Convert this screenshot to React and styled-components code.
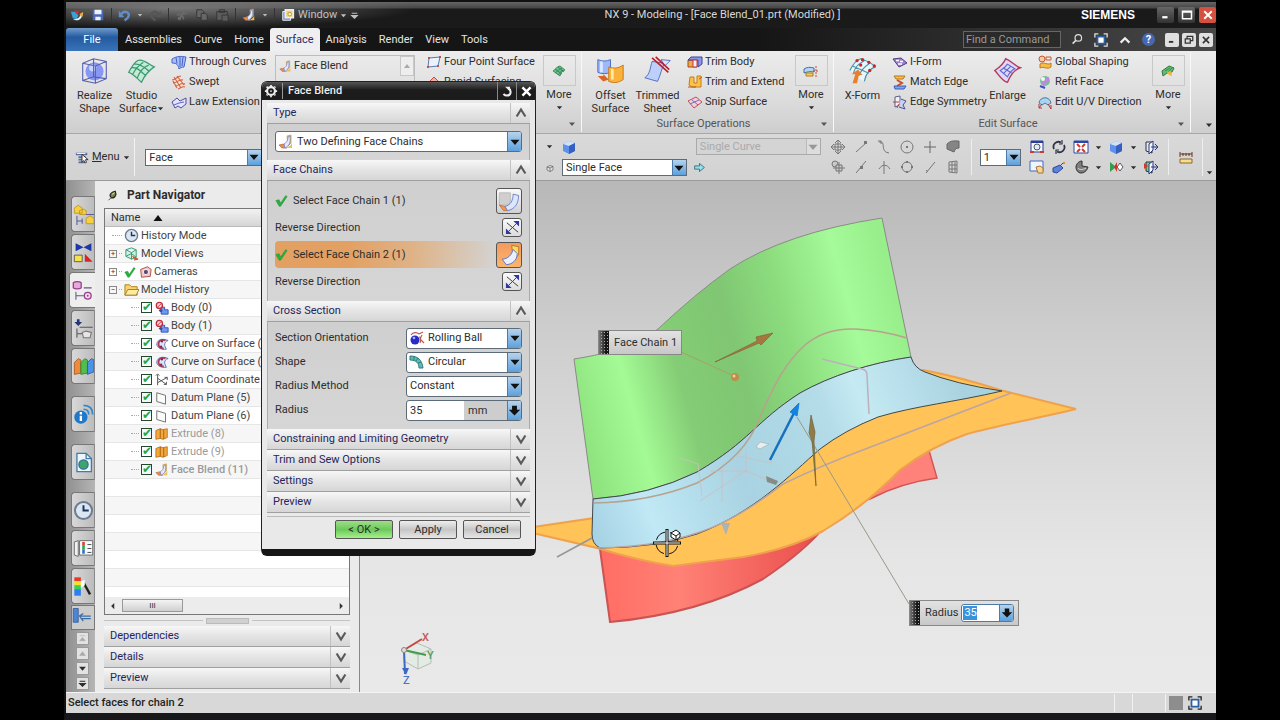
import { useState } from "react";
import styled, { createGlobalStyle } from "styled-components";

const icons = {
  logo: (
    <>
      <path d="M1 4h5l3 4-2 4-4-1z" fill="#3aa0d8" />
      <path d="M4 3h6l-2 4z" fill="#e0242c" />
      <path d="M3 12c5 3 10 0 11-7l-3 1c0 4-3 6-8 6z" fill="#e8f4fa" />
      <path d="M10 7l4-3-1 6z" fill="#f2a128" />
    </>
  ),
  save: (
    <>
      <path d="M2 2h12v12H2z" fill="#4a68b8" />
      <path d="M4 2h8v5H4zM5 10h6v4H5z" fill="#eef2fc" />
    </>
  ),
  undo: (
    <>
      <path d="M1 2v8h7z" fill="#5f8ecb" />
      <path d="M4 6c4-5 11-2 9 3-1 3-3 4-5 5" fill="none" stroke="#5f8ecb" strokeWidth="3" />
    </>
  ),
  redo: (
    <>
      <path d="M15 2v8H8z" fill="#565656" />
      <path d="M12 6C8 1 1 4 3 9c1 3 3 4 5 5" fill="none" stroke="#565656" strokeWidth="3" />
    </>
  ),
  cut: (
    <g fill="none" stroke="#6a6a6a" strokeWidth="2">
      <path d="M11 2L6 11M2 8l12-2M8 8l2 5" />
      <circle cx="5" cy="12" r="1" />
    </g>
  ),
  copy: (
    <g fill="#666" stroke="#333">
      <path d="M2 2h6l2 2v7H2z" />
      <path d="M7 6h5l2 2v6H7z" />
    </g>
  ),
  paste: (
    <g fill="#5c5c5c" stroke="#333">
      <path d="M2 4h12v10H2zM5 2h6v3H5z" />
      <path d="M8 8h7v7H8z" />
    </g>
  ),
  blend: (
    <>
      <path d="M9 2l4-1v8l-3 3z" fill="#f7d65c" stroke="#b98a3a" strokeWidth=".7" />
      <path d="M1 11l5-1 3 4H4z" fill="#e98d4e" stroke="#b8643a" strokeWidth=".7" />
      <path d="M6 10c2-1 4-3 4-7l2-1c1 7-1 10-5 12z" fill="#e3eafd" stroke="#6f80c8" strokeWidth=".8" />
      <path d="M7 14c4-1 7-3 7-6v6z" fill="#f0bf4a" />
    </>
  ),
  window: (
    <>
      <path d="M2 4h9v10H2z" fill="#6c8ee0" stroke="#fff" />
      <path d="M5 2h9v9H5z" fill="#f2d25a" stroke="#e8eefc" strokeWidth="2" />
      <circle cx="10" cy="7" r="2" fill="#fffbe0" stroke="#b89020" />
    </>
  ),
  realize: (
    <>
      <circle cx="8" cy="8.500" r="5" fill="#8797f2" />
      <circle cx="7" cy="6.500" r="2" fill="#cdd6ff" />
      <path
        d="M1.500 4l6-2.500 7 1.500v9.500l-6 2.500-7-1.500zM1.500 4l7 1.500 6-2.500M8.500 5.500V15M1.500 13.500l6-2 7 1M7.500 1.500v10"
        fill="none"
        stroke="#5660b0"
        strokeWidth=".6"
      />
    </>
  ),
  studio: (
    <>
      <path d="M1 9C3 5 5 3 6 2.500 9 1 12 5 15 6c-3 2-5 4-7 8.500C6 13 4 10 1 9z" fill="#c2ecd6" />
      <path
        d="M1 9C3 5 5 3 6 2.500 9 1 12 5 15 6c-3 2-5 4-7 8.500C6 13 4 10 1 9zM3 10.500C5 6 7 5 9 3.500M5.500 12.500C7 8 9 6 12 5M2.500 6.500C6 6 8 9 10.500 11M4 4.500C8 4 10 7 12.500 8.500"
        fill="none"
        stroke="#3f9a74"
        strokeWidth=".7"
      />
    </>
  ),
  through: (
    <>
      <path d="M1 5c5-3 9-3 14-2l-2 10c-2 0-4 1-5 2-1-4-2-6-7-6z" fill="#a8bcf8" />
      <path
        d="M1 5c5-3 9-3 14-2l-2 10c-2 0-4 1-5 2-1-4-2-6-7-6zM5 3.500l1 6M9 3v10M12 3l-1 9"
        fill="none"
        stroke="#4563c8"
      />
    </>
  ),
  swept: (
    <>
      <path d="M2 5l7-3 5 7-6 5z" fill="#f7e2d6" />
      <path
        d="M1 6c4 0 5-4 9-4M2 9c4 0 6-4 10-3M4 12c4 0 6-4 10-2M7 15c3-1 4-3 7-2M3 3l7 11M6 2l7 9M2 7l4 7"
        fill="none"
        stroke="#d4603e"
        strokeWidth="1.100"
      />
    </>
  ),
  law: (
    <>
      <path d="M1 8l5-4 3 3 6-3v6l-5 4-3-2-3 2z" fill="#dfe4ff" stroke="#50509c" />
      <path d="M3 11l5-2 5-1" stroke="#6c62c0" fill="none" />
    </>
  ),
  fourPoint: (
    <>
      <path d="M3 4l11-1-2 9-10 1z" fill="#eaf2fb" stroke="#5b78b0" />
      <path d="M2 3h2v2H2zM13 2h2v2h-2zM11 11h2v2h-2zM1 12h2v2H1z" fill="#c2543f" />
    </>
  ),
  rapid: <path d="M2 9l6-6 6 6-6 5z" fill="#f3b0a4" stroke="#d2482e" />,
  more: (
    <>
      <path d="M2 8c2-1 4-5 7-5l5 4c-3 1-4 3-5 6z" fill="#6bc08a" />
      <path
        d="M2 8c2-1 4-5 7-5l5 4c-3 1-4 3-5 6zM4 10c3-2 4-4 7-5M7 12c2-3 3-4 5-5M4 6l7 5M7 4l6 5"
        stroke="#2b7d4e"
        fill="none"
        strokeWidth=".8"
      />
    </>
  ),
  offset: (
    <>
      <path d="M1 2c2 1 5 1 7 0v7c-2 1-5 1-7 0z" fill="#9bbaf8" stroke="#4264c8" strokeWidth=".5" />
      <path d="M3 3v6" stroke="#dfe9ff" strokeWidth="1.500" />
      <path d="M7 6c3 1 5 1 8-1v8c-3 2-5 2-8 1z" fill="#fbb23a" stroke="#c87414" strokeWidth=".5" />
      <path d="M9 7v6" stroke="#ffe9a8" strokeWidth="1.500" />
      <path d="M1 11l3 0v-1l3 3-3 1z" fill="#d8652a" />
    </>
  ),
  trimmed: (
    <>
      <path d="M5 3l7 1c-2 3-2 6-4 10L1 12c3-2 3-6 4-9z" fill="#bcd0fb" stroke="#4c68bd" strokeWidth=".5" />
      <path d="M10 2l5 .500-3 3z" fill="#dce6fd" stroke="#4c68bd" strokeWidth=".5" />
      <path d="M5 1l9 8M7 .500l7.500 7" stroke="#b8202c" strokeWidth=".9" />
    </>
  ),
  trimBody: (
    <>
      <path d="M1 6h9v7H1z" fill="#f2a83c" stroke="#a04a24" />
      <path d="M1 6l3-3h11v7l-4 3V6z" fill="#8a9ae4" stroke="#3c3f98" />
      <path d="M6 6h4v7H6z" fill="#f6f0fa" stroke="#c63a3a" />
    </>
  ),
  trimExtend: (
    <>
      <path d="M3 3h4v6h3V2h4v11H5l-3-2z" fill="#fbc244" stroke="#c87a18" />
      <path d="M1 13h8M12 5l3-2" stroke="#b05a28" />
    </>
  ),
  snip: (
    <>
      <path d="M1 7l8-4 6 5-8 6z" fill="#f8d0d4" stroke="#c44a5e" />
      <path d="M3 10l9-4M5 6l6 5" stroke="#6a6ec4" />
    </>
  ),
  moreOps: (
    <>
      <path d="M1 6c3-2 6-2 10-1v4c-4-1-7 0-10 1z" fill="#b4d8f4" stroke="#3f6fb6" />
      <path d="M3 10h7v3H3z" fill="#f8cf58" stroke="#b07a1c" />
      <path d="M13 3v11M10 8h6" stroke="#c94a3a" strokeDasharray="2 1" />
    </>
  ),
  xform: (
    <>
      <path d="M1 8C3 4 5 2 7 1.500c3 1 6 2 8 4.500-3 1-5 3-6 8-3-1-5-4-8-6z" fill="#e6f6fb" />
      <path
        d="M1 8C3 4 5 2 7 1.500c3 1 6 2 8 4.500-3 1-5 3-6 8M3 9.500c1-4 3-5 6-7M6 11c1-3 3-5 6-7M2.500 5.500l9 4"
        fill="none"
        stroke="#4f8fa8"
        strokeWidth=".6"
      />
      <g fill="#c62626">
        <circle cx="5" cy="2.500" r=".9" />
        <circle cx="8" cy="2" r=".9" />
        <circle cx="11.500" cy="3.500" r=".9" />
        <circle cx="14.500" cy="5.500" r=".9" />
        <circle cx="7" cy="5" r=".9" />
        <circle cx="12" cy="8" r=".9" />
      </g>
      <path d="M2.500 15l1.500-5H2l3.500-2.500L8 10.500H6L5 15z" fill="#e87f2c" />
    </>
  ),
  iform: (
    <>
      <path d="M1 5l8-1 6 5-8 4z" fill="#9d82cc" stroke="#553a88" />
      <path d="M4 6.500h3M8 7.500h3M6 10h4" stroke="#fff" strokeWidth="1.500" />
    </>
  ),
  match: (
    <>
      <path d="M2 2h11l-2 3H4z" fill="#f6c04a" stroke="#b8761c" />
      <path d="M5 6l5 3-5 3" stroke="#c7502c" fill="none" strokeWidth="2" />
      <path d="M2 12h12l-2 3H3z" fill="#7ba8ec" stroke="#3a5db4" />
    </>
  ),
  symmetry: (
    <>
      <path d="M3 3l5-1v9l-5 2z" fill="#f2f2fa" stroke="#5a5a88" />
      <path d="M9 5l5 2-3 4 2 4-6-2" fill="#c9d2f4" stroke="#4b4f94" />
      <path d="M1 8h6M5 14l2-4" stroke="#ba3c3c" />
    </>
  ),
  enlarge: (
    <>
      <path d="M1 8C4 6 6 4 7 1.500c3 1 5 4 8 5-3 1-5 3-7 8C5 14 3 10 1 8z" fill="#dcd8fa" stroke="#b83a5c" strokeWidth=".8" />
      <path
        d="M4 8c2-1 3-2 4-3.500l4 2.500c-2 1-3 2-4 4.500zM6 9.500l4-4M5.500 6.500l5 3"
        fill="none"
        stroke="#6468c8"
        strokeWidth=".6"
      />
    </>
  ),
  global: (
    <>
      <path d="M3 10c4-3 8 2 11-1v4c-4 3-7-1-11 1z" fill="#f6bd45" stroke="#c07a1a" />
      <circle cx="5" cy="5" r="3" fill="#f7c9a4" stroke="#c8562c" />
      <path d="M9 3h5v3H9z" fill="none" stroke="#c8562c" />
    </>
  ),
  refit: (
    <>
      <circle cx="8" cy="7" r="5" fill="#6fc58e" />
      <path d="M4 9c2-5 5-6 8-6v5c-3 0-4 2-5 5z" fill="#ba8cdb" />
      <circle cx="6" cy="5" r="2" fill="#eafaf0" />
      <path d="M3 12l5 2" stroke="#3f52c2" strokeWidth="2" />
    </>
  ),
  uv: (
    <>
      <path d="M2 9c1-7 11-7 12 0l-3 2-3-2-3 2z" fill="#a8d4ec" stroke="#4b7cac" />
      <path d="M2 14l3-4M14 15l-3-5M2 10v4h3M14 11v4" stroke="#b8343c" fill="none" />
    </>
  ),
  moreEdit: (
    <>
      <path d="M2 8l7-5 5 2-2 4-5 1-4 3z" fill="#63bd6a" stroke="#2d7842" />
      <path d="M5 8l5-3M8 9l4-4" stroke="#2d7842" strokeWidth=".7" />
      <path d="M7 9l4-1 1 5-3-1z" fill="#f2b33e" />
    </>
  ),
  menu: (
    <>
      <path d="M1 3h13v3H1zM4 7h8v2H4zM4 10h8v2H4zM4 13h8v2H4z" fill="#5b6f9c" />
      <path d="M2 4h10" stroke="#fff" />
      <path d="M8 5v9l2-2 2 3 1-1-1-3h3z" fill="#fff" stroke="#222" />
    </>
  ),
  cube: (
    <>
      <path d="M2 5l6-3 6 2v8l-6 3-6-3z" fill="#5f90ea" />
      <path d="M2 5l6-3 6 2-6 3z" fill="#cfe2fb" />
      <path d="M8 7v8l6-3V4z" fill="#3660c0" />
    </>
  ),
  cubeLine: (
    <path d="M2 6l6-3 6 2v7l-6 3-6-3zM2 6l6 2 6-3M8 8v7" fill="#dfe3e8" stroke="#333" />
  ),
  go: <path d="M2 6h6V3l6 5-6 5v-3H2z" fill="#8fe0ea" stroke="#34606e" />,
  moveAll: (
    <path
      d="M8 1v14M1 8h14M5 4l3-3 3 3M5 12l3 3 3-3M4 5L1 8l3 3M12 5l3 3-3 3M5 5h6v6H5z"
      fill="none"
      stroke="#777"
    />
  ),
  cluster: (
    <g fill="#c9c9c9" stroke="#777">
      <circle cx="5" cy="5" r="3" />
      <path d="M6 6h6v6H6zM9 3v12M3 9h12" />
    </g>
  ),
  lineEnd: (
    <>
      <path d="M3 13L13 4" stroke="#777" />
      <path d="M11 2h3v3h-3z" fill="#777" />
    </>
  ),
  lineMid: (
    <>
      <path d="M3 14L13 2" stroke="#777" />
      <path d="M7 7h3v3H7z" fill="#777" />
    </>
  ),
  spline: <path d="M3 3c8-2 0 10 10 11M2 2h3v3" fill="none" stroke="#777" />,
  cross: <path d="M3 10c3-5 8-5 11 0M8 2v13" fill="none" stroke="#777" />,
  target: (
    <>
      <circle cx="8" cy="8" r="6" fill="none" stroke="#777" />
      <circle cx="8" cy="8" r="1" fill="#555" />
    </>
  ),
  quad: (
    <>
      <circle cx="8" cy="8" r="5" fill="none" stroke="#777" />
      <path d="M7 2h2v2H7zM7 12h2v2H7zM2 7h2v2H2zM12 7h2v2h-2z" fill="#777" />
    </>
  ),
  plus: <path d="M8 2v12M2 8h12" stroke="#666" />,
  slash: <path d="M4 14l9-11M4 11l2 2" stroke="#777" />,
  face: <path d="M2 5c4-4 8-3 12-3v7c-3 0-4 1-5 4L2 10z" fill="#858585" stroke="#666" />,
  gridFace: <path d="M4 3l8-1v12l-8-1zM4 6h8M4 10h8M7 3v10M10 3v10" fill="none" stroke="#777" />,
  zoomWin: (
    <>
      <path d="M2 2h12v11H2z" fill="#f5f7ff" stroke="#2a3e9c" />
      <path d="M2 3h12" stroke="#2a3e9c" strokeWidth="2" />
      <circle cx="8" cy="8" r="3" fill="#dcecf8" stroke="#555" />
      <path d="M1 13h4M11 13h4" stroke="#d03a2a" strokeWidth="2" />
    </>
  ),
  rotate: (
    <g fill="none" stroke="#2f3548" strokeWidth="1.800">
      <path d="M3 10a5 5 0 0 1 7-6.500M13 6a5 5 0 0 1-7 6.500" />
      <path d="M11 1v4H8M5 15v-4h3" strokeWidth="1.200" />
    </g>
  ),
  fit: (
    <>
      <path d="M1 2h14v12H1z" fill="#fff" stroke="#2a48a4" />
      <path d="M1 3h14" stroke="#2a48a4" strokeWidth="2" />
      <path d="M4 5l3 3M12 5L9 8M4 13l3-3M12 13L9 10" stroke="#d03a2a" strokeWidth="2" />
    </>
  ),
  orient: (
    <>
      <path d="M3 3h6v11l-6-2z" fill="#e4e8fa" stroke="#333" />
      <path d="M6 5l4-3v9l-4 4z" fill="#f4f6ff" stroke="#26387e" />
      <path d="M8 8h6M12 5l3 3-3 3" fill="none" stroke="#26387e" />
    </>
  ),
  orientAxis: (
    <>
      <path d="M3 3h6v11l-6-2z" fill="#7fc49a" stroke="#333" />
      <path d="M6 5l4-3v9l-4 4z" fill="#f4f6ff" stroke="#26387e" />
      <path d="M8 8h6M12 5l3 3-3 3" fill="none" stroke="#26387e" />
      <path d="M1 4l4 3-4 3z" fill="#d03a2a" />
    </>
  ),
  pan: (
    <>
      <path d="M1 2h13v10H1z" fill="#eef4ff" stroke="#4468b8" />
      <path d="M7 8l4-1 3 2v5H9z" fill="#f6d49a" stroke="#a8762c" />
    </>
  ),
  persp: (
    <>
      <path d="M2 9l7-3 3 3-6 5-4-1z" fill="#5c82dc" stroke="#2b4798" />
      <path d="M9 7l4-4" stroke="#2b4798" />
      <path d="M12 3h2v2h-2z" fill="#e0893a" />
    </>
  ),
  section: (
    <>
      <path d="M3 8c0-3 3-6 6-6v5l6 1c-1 4-4 6-7 6s-5-3-5-6z" fill="#7d7d7d" stroke="#333" />
      <path d="M5 9c1 2 5 2 8 0" stroke="#ddd" fill="none" />
    </>
  ),
  show: (
    <>
      <path d="M2 3l6 5-6 5z" fill="#2fa04c" />
      <path d="M6 8l3-5v10z" fill="#d2322a" />
      <path d="M9 8l3-4 3 4-3 4z" fill="#fff" stroke="#556" />
    </>
  ),
  measure: (
    <>
      <path d="M2 3v5M14 3v5M2 5h12M5 4v3M8 4v3M11 4v3" stroke="#6a3528" />
      <path d="M2 10h12v4H2z" fill="#f6dd92" stroke="#8a6a20" />
    </>
  ),
  clock: (
    <>
      <circle cx="8" cy="8" r="6.500" fill="#dbe6f4" stroke="#6e7c90" strokeWidth="1.500" />
      <path d="M8 4v4h4" fill="none" stroke="#1f3558" strokeWidth="1.500" />
    </>
  ),
  views: (
    <>
      <path d="M2 4l6-2 5 2v8l-5 2-6-3zM2 4l6 3 5-3M8 7v7M2 11l6-3 5 4" fill="#d2f2e4" stroke="#2c9c72" />
      <path d="M9 11l6 3-4 1" fill="#e2603a" stroke="#c94a2c" />
    </>
  ),
  camera: (
    <>
      <path d="M3 5l8-3 4 3-1 8-10 1z" fill="#f0c9c4" stroke="#a84440" />
      <circle cx="9" cy="8" r="3" fill="#62487a" stroke="#fff" />
    </>
  ),
  tick: <path d="M1 8l4-1 2 4 6-9 2 1-8 12H5z" fill="#26b03c" stroke="#1c8a2e" strokeWidth=".5" />,
  folder: (
    <>
      <path d="M1 3h5l2 2h6v9H1z" fill="#f8d36a" stroke="#a8801e" />
      <path d="M4 8h12l-3 6H1z" fill="#fdeaa0" stroke="#a8801e" />
    </>
  ),
  body: (
    <>
      <path d="M7 7h4v3h4v5H7z" fill="#6f9af0" stroke="#2f4faa" />
      <path d="M5 10l3 2" stroke="#2f4faa" strokeWidth="3" />
      <circle cx="5" cy="5" r="3.500" fill="#f8d0d0" stroke="#c02c3c" strokeWidth="1.500" />
      <path d="M3 7l4-4" stroke="#c02c3c" />
    </>
  ),
  curveOn: (
    <>
      <path d="M2 8C3 3 8 1 15 4c-3 1-4 3-4 5 0 1 1 3 2 5C7 15 2 12 2 8z" fill="#d8e4fb" stroke="#5468a8" />
      <path d="M12 4C7 2 4 5 4 8s2 5 6 5" fill="none" stroke="#a83a60" strokeWidth="2" />
      <circle cx="8" cy="5" r="1.300" fill="#8c2038" />
      <circle cx="7" cy="11" r="1.300" fill="#8c2038" />
    </>
  ),
  csys: (
    <path
      d="M3 2v12M3 6l10 7M3 11l11-6M1 3l2-2 2 2M10 13h3v-3M11 5h3v3"
      fill="none"
      stroke="#444"
    />
  ),
  plane: <path d="M2 2l10 3v10L2 12z" fill="#fbfbfb" stroke="#5f675f" />,
  extrude: (
    <>
      <path d="M1 4l5-2 3 1 5-1v10l-5 2-3-1-5 1z" fill="#f5a83a" stroke="#b8701c" />
      <path d="M6 2v11M10 3v11" stroke="#9c5a18" />
    </>
  ),
  pin: (
    <>
      <path d="M5 12L2 15" stroke="#222" />
      <path d="M4 9c0-3 3-5 7-6l1 4c-1 4-4 5-6 5z" fill="#7d8a3c" stroke="#222" strokeWidth="1.500" />
      <path d="M7 7l3-2" stroke="#fff" />
    </>
  ),
  assembly: (
    <>
      <path d="M1 3l3-2 3 2v4H1zM5 5l3-1 2 1v3H5zM10 11l3-2 3 2v4h-6z" fill="#f7cf3f" stroke="#b8901c" strokeWidth=".6" />
      <path d="M10 8h6M3 9v7M3 13h4M7 11v4" stroke="#5b5b9c" fill="none" strokeWidth=".8" />
    </>
  ),
  constraint: (
    <>
      <path d="M2 1l6 3-6 3zM14 1L8 4l6 3z" fill="#1c37a8" />
      <path d="M1 10h6v5H1z" fill="#f8e24a" stroke="#444" strokeWidth=".6" />
      <path d="M9 9l6 6H9z" fill="#d4252a" />
    </>
  ),
  partNav: (
    <>
      <path d="M1 2c1-1 5-1 6 0v4c-1 1-5 1-6 0z" fill="#e9a8dc" stroke="#96408a" />
      <path d="M9 6h6M3 9v6M3 12h6" stroke="#5b5b7c" fill="none" strokeWidth=".8" />
      <circle cx="12" cy="12" r="2.600" fill="#f5d6f0" stroke="#96408a" />
      <circle cx="12" cy="12" r=".7" fill="#96408a" />
    </>
  ),
  reuse: (
    <>
      <path d="M3 1h2v2h2L4 6 1 3h2z" fill="#22367c" />
      <path d="M5 7h10M3 8v7M3 12h4" stroke="#555" fill="none" strokeWidth=".8" />
      <path d="M7 11l3-1 4 1-1 4-5 0z" fill="#e6e6e6" stroke="#777" strokeWidth=".8" />
    </>
  ),
  library: (
    <>
      <path d="M1 5l3-3 2 1v10l-5 1z" fill="#f08a3a" stroke="#9c5420" strokeWidth=".6" />
      <path d="M6 5l3-3 2 1v10l-5 1z" fill="#4fc04e" stroke="#2c7c2c" strokeWidth=".6" />
      <path d="M11 5l3-3 2 1v9l-5 2z" fill="#4c92e8" stroke="#2c549c" strokeWidth=".6" />
    </>
  ),
  info: (
    <>
      <circle cx="6" cy="10" r="5" fill="#1f78c8" />
      <path d="M6 9v4M6 6v2" stroke="#fff" strokeWidth="1.800" />
      <path d="M8 4c3 0 4 2 4 4M8 1c5 0 7 3 7 7" fill="none" stroke="#2f86cc" strokeWidth="1.300" />
    </>
  ),
  web: (
    <>
      <path d="M3 1h7l4 4v10H3z" fill="#eef6fc" stroke="#3f7ca8" />
      <path d="M10 1v4h4" fill="none" stroke="#3f7ca8" />
      <circle cx="8" cy="9.500" r="3.500" fill="#3fa46c" stroke="#2c6c9c" />
    </>
  ),
  roles: (
    <>
      <path d="M1 3l3-1v12l-3-1z" fill="#f2f2f2" stroke="#666" strokeWidth=".7" />
      <path d="M5 2h10v11H5z" fill="#f6fbff" stroke="#666" strokeWidth=".7" />
      <path d="M7 3h2v3H7z" fill="#d8462c" />
      <path d="M7 6h2v3H7z" fill="#38a04e" />
      <path d="M7 9h2v3H7z" fill="#3a72c8" />
      <path d="M11 5h3M11 8h3M11 11h3" stroke="#444" strokeWidth=".7" />
    </>
  ),
  palette: (
    <>
      <path d="M1 1h5v3H1z" fill="#e83a22" />
      <path d="M1 4h5v3H1z" fill="#f6e02c" />
      <path d="M1 7h5v3H1z" fill="#3ccf56" />
      <path d="M1 10h5v5H1z" fill="#2b7ff0" />
      <path d="M8 5l5 9" stroke="#222" strokeWidth="1.800" />
      <path d="M6 4l3-1 0 4-3 2z" fill="#fff" />
    </>
  ),
  wizard: (
    <>
      <path d="M1 2h4v11H1z" fill="#4c86d4" stroke="#2b5490" strokeWidth=".6" />
      <path d="M6 8h9M7 10h8M9 6L6 8l3 4" stroke="#3a6ca8" fill="none" />
    </>
  ),
  selFace: (
    <>
      <path d="M1 2h8v5c0 3-1 4-4 4H1z" fill="#cfcfcf" stroke="#a5a5a5" strokeWidth=".4" />
      <path d="M1 11l4 1 2 3H4z" fill="#f09a4e" stroke="#b8643a" strokeWidth=".5" />
      <path d="M5 12c4-1 6-4 6-9l4 1c0 6-3 10-8 11z" fill="#dce6ff" stroke="#5c74c0" strokeWidth=".6" />
    </>
  ),
  selFaceHot: (
    <>
      <path d="M10 1l5 1v6l-4 3z" fill="#fbdc62" stroke="#a85a1c" strokeWidth=".5" />
      <path d="M3 11c4 0 7-3 8-7l3 3c0 5-4 8-8 8z" fill="#eaf0ff" stroke="#5c74c0" strokeWidth=".7" />
    </>
  ),
  reverse: (
    <>
      <path d="M2 3l12 10" stroke="#333" />
      <path d="M4 12l8-8" stroke="#2c38a4" />
      <path d="M1 9v6h6zM9 1h6v6z" fill="#2c38a4" />
    </>
  ),
  ball: (
    <>
      <circle cx="6" cy="10" r="4.500" fill="#2a2ac8" />
      <circle cx="5" cy="8" r="1.300" fill="#a8b4ff" />
      <path d="M2 5c2-3 6-3 8-1M10 4l4-2M10 7c2 0 2 3 1 6M13 5l-2 4 4 4" fill="none" stroke="#c6564c" strokeWidth="1.200" />
    </>
  ),
  circular: (
    <>
      <path d="M1 2c8 0 12 4 13 12h-4C10 9 7 6 1 6z" fill="#5fbcb4" stroke="#2c7c78" />
      <path d="M5 2v4M9 4L7 7M12 8l-3 1" stroke="#2c7c78" fill="none" />
    </>
  ),
  search: (
    <>
      <circle cx="9" cy="6" r="4" fill="none" stroke="#ddd" strokeWidth="1.500" />
      <path d="M6 9l-4 4" stroke="#ddd" strokeWidth="2" />
    </>
  ),
  full: (
    <>
      <path d="M1 5V1h4M11 1h4v4M15 11v4h-4M5 15H1v-4" fill="none" stroke="currentColor" strokeWidth="1.500" />
      <path d="M4 4h8v8H4z" fill="#fff" stroke="#2d5fa0" strokeWidth="2" />
    </>
  ),
  up: <path d="M3 11l5-5 5 5" fill="none" stroke="#eee" strokeWidth="2.500" />,
  gear: (
    <>
      <circle cx="8" cy="8" r="4.500" fill="none" stroke="#eee" strokeWidth="2.500" />
      <path d="M8 1v2M8 13v2M1 8h2M13 8h2M3 3l1.500 1.500M12 12l1 1M13 3l-1 1M3 13l1-1" stroke="#eee" strokeWidth="2" />
      <circle cx="8" cy="8" r="1" fill="#eee" />
    </>
  ),
  reset: (
    <>
      <path d="M9 4c4 2 4 9-2 9-2 0-3-1-4-2" fill="none" stroke="#eee" strokeWidth="2.500" />
      <path d="M5 2h6v6z" fill="#eee" />
    </>
  ),
  close: <path d="M3 3l10 10M13 3L3 13" stroke="#fff" strokeWidth="3" />,
  chevUp: <path d="M3 12l5-8 5 8" fill="none" stroke="#5a5a5a" strokeWidth="2.500" />,
  chevDown: <path d="M3 4l5 8 5-8" fill="none" stroke="#5a5a5a" strokeWidth="2.500" />,
  caret: <path d="M2 5h12l-6 7z" fill="currentColor" />,
  fat: <path d="M5 2h6v5h4l-7 7-7-7h4z" fill="#111" />,
  toTop: <path d="M3 3h10M3 12l5-6 5 6z" fill="#aaa" stroke="#aaa" />,
  triUp: <path d="M2 12l6-8 6 8z" fill="#aaa" />,
  toEnd: <path d="M3 8l5 5 5-5zM3 4h10" fill="currentColor" stroke="currentColor" strokeWidth="2" />,
  left: <path d="M10 3v10L5 8z" fill="#333" />,
  right: <path d="M6 3v10l5-5z" fill="#333" />,
  min: <path d="M3 11h7" stroke="currentColor" strokeWidth="3" />,
  max: <path d="M2 3h12v10H2zM2 4h12" fill="none" stroke="currentColor" strokeWidth="2" />,
  restore: <path d="M5 6V2h9v7h-3M2 6h8v7H2z" fill="none" stroke="currentColor" strokeWidth="2" />,
  cross2: <path d="M3 3l10 10M13 3L3 13" stroke="currentColor" strokeWidth="2.500" />,
};

const Icon = ({ name, size = 16 }) => (
  <svg width={size} height={size} viewBox="0 0 16 16" aria-hidden="true">
    {icons[name]}
  </svg>
);

const Drop = ({ id, label, value, icon, disabled, small }) => (
  <DropBox $disabled={disabled} $small={small}>
    {icon && <Icon name={icon} />}
    <select id={id} aria-label={label} disabled={disabled} defaultValue={value}>
      <option>{value}</option>
    </select>
    <DropArrow $disabled={disabled}>
      <Icon name="caret" size={12} />
    </DropArrow>
  </DropBox>
);

const Section = ({ title, open, children }) => {
  const [isOpen, setIsOpen] = useState(open);
  return (
    <>
      <SectionHeader type="button" onClick={() => setIsOpen(!isOpen)}>
        <span>{title}</span>
        <SectionChevron>
          <Icon name={isOpen ? "chevUp" : "chevDown"} size={14} />
        </SectionChevron>
      </SectionHeader>
      {isOpen && children}
    </>
  );
};

const Big = ({ icon, label, menu }) => (
  <BigButton type="button">
    <Icon name={icon} size={29} />
    <span>
      {label}
      {menu && <Icon name="caret" size={7} />}
    </span>
  </BigButton>
);

const Small = ({ items, width }) => (
  <SmallColumn $width={width}>
    {items.map(([icon, label]) => (
      <SmallButton type="button" key={label}>
        <Icon name={icon} />
        {label}
      </SmallButton>
    ))}
  </SmallColumn>
);

const More = ({ icon }) => (
  <MoreButton type="button">
    <MoreBox>
      <Icon name={icon} />
    </MoreBox>
    More
    <Icon name="caret" size={7} />
  </MoreButton>
);

const menuTabs = ["Assemblies", "Curve", "Home", "Surface", "Analysis", "Render", "View", "Tools"];

const features = [
  ["body", "Body (0)"],
  ["body", "Body (1)"],
  ["curveOn", "Curve on Surface ("],
  ["curveOn", "Curve on Surface ("],
  ["csys", "Datum Coordinate"],
  ["plane", "Datum Plane (5)"],
  ["plane", "Datum Plane (6)"],
  ["extrude", "Extrude (8)", "dim"],
  ["extrude", "Extrude (9)", "dim"],
  ["blend", "Face Blend (11)", "bold"],
];

const resourceTabs = [
  ["assembly", "Assembly Navigator"],
  ["constraint", "Constraint Navigator"],
  ["partNav", "Part Navigator"],
  ["reuse", "Reuse Library"],
  ["library", "HD3D Tools"],
  ["info", "Web Information"],
  ["web", "Web Browser"],
  ["clock", "History"],
  ["roles", "Process Studio"],
  ["palette", "System Materials"],
];

const snapRows = [
  ["moveAll", "lineEnd", "spline", "target", "plus", "face"],
  ["cluster", "lineMid", "cross", "quad", "slash", "gridFace"],
];

const Model = () => (
  <ModelSvg viewBox="360 180 856 512" preserveAspectRatio="xMinYMin slice">
    <defs>
      <linearGradient id="green" gradientUnits="userSpaceOnUse" x1="580" y1="420" x2="905" y2="330">
        <stop offset="0" stopColor="#8fe480" />
        <stop offset=".16" stopColor="#a4fb95" />
        <stop offset=".32" stopColor="#84cc75" />
        <stop offset=".5" stopColor="#80c673" />
        <stop offset=".66" stopColor="#8bdb7d" />
        <stop offset=".86" stopColor="#a5fa99" />
        <stop offset="1" stopColor="#99ee8c" />
      </linearGradient>
      <linearGradient id="blue" gradientUnits="userSpaceOnUse" x1="592" y1="530" x2="960" y2="380">
        <stop offset="0" stopColor="#a5d2e4" />
        <stop offset=".15" stopColor="#c0e8f5" />
        <stop offset=".4" stopColor="#a9d3e2" />
        <stop offset=".65" stopColor="#b3dbe8" />
        <stop offset=".75" stopColor="#c5eaf3" />
        <stop offset="1" stopColor="#a9d2e0" />
      </linearGradient>
      <linearGradient id="red" x1="0" y1="0" x2="1" y2="0">
        <stop offset="0" stopColor="#ff6d64" />
        <stop offset=".35" stopColor="#ff8176" />
        <stop offset="1" stopColor="#ea4c4a" />
      </linearGradient>
    </defs>
    <path
      d="M600 548L610 621C663 616 717 603 763 578C790 560 810 544 826 524L700 540Z"
      fill="url(#red)"
      stroke="#cc5353"
      strokeWidth="2"
    />
    <path d="M928 446L937 477Q900 482 870 498L880 470Z" fill="#ff827a" stroke="#d65454" strokeWidth="1.500" />
    <path
      d="M520 528L594 517L640 480L860 400L923 369Q960 376 1000 389L1076 408C1040 417 1000 424 967 433Q930 446 900 469Q865 505 823 530Q790 548 743 556L673 565Q640 560 597 547L537 533L520 530Z"
      fill="#ffc357"
      stroke="#f0a14c"
      strokeWidth="2"
    />
    <path
      d="M574 358C600 354 632 347 658 328Q695 293 730 268Q785 232 882 217L911 356C870 362 830 375 800 392C755 421 750 440 697 471Q650 494 593 498Z"
      fill="url(#green)"
      stroke="#8b8b85"
    />
    <path
      d="M593 498Q650 494 697 471C750 440 755 421 800 392C830 375 870 362 911 356Q914 367 925 371Q955 383 1002 390C955 401 915 405 878 416Q845 429 820 448C790 474 755 511 697 533Q655 547 600 547Q592 543 592 533Z"
      fill="url(#blue)"
      stroke="#40474a"
    />
    <g fill="none" strokeWidth="1.500">
      <path d="M594 502Q650 501 697 482C735 462 752 438 760 416C774 384 785 362 805 344Q825 327 855 328Q880 329 907 337" stroke="#b8a28d" />
      <path d="M597 547C700 545 740 515 783 483Q820 465 868 447L1011 392" stroke="#bba5a2" />
      <path d="M822 358L862 368Q867 369 867 374L869 413" stroke="#bcb0bb" />
      <path d="M557 556L592 537" stroke="#969696" />
    </g>
    <g fill="none" stroke="#c9bebf" opacity=".8">
      <path d="M680 457L698 463L702 495M722 467v34M746 450v22M710 470h36L770 480M700 500l45-30M737 455l35 7" />
    </g>
    <path d="M681 351L734 375" stroke="#a2a36a" />
    <circle cx="735" cy="376" r="4" fill="#b98f4a" />
    <circle cx="734" cy="375" r="1.500" fill="#ecd092" />
    <path d="M715 361L757 340L756 336L773 332L761 344L759 342Z" fill="#a4773d" stroke="#86643a" strokeWidth=".7" />
    <path d="M770 459L794 412" stroke="#1670be" strokeWidth="2.500" />
    <path d="M799 402L790 411L797 415Z" fill="#1583dd" stroke="#1583dd" />
    <path d="M797 416L909 603" stroke="#99988a" />
    <path d="M816 485L812 440L809 432L811 414L815 431L814 440Z" fill="#8f7c46" stroke="#70623a" strokeWidth=".7" />
    <path d="M756 446l4-5 9 2-9 5z" fill="#e8edf0" stroke="#93a0a5" strokeWidth=".5" />
    <path d="M766 475l12 5-2 4-9-3z" fill="#858c85" />
    <path d="M721 522h9l-4 12z" fill="#aeb2b2" />
    <g stroke="#111" fill="none">
      <circle cx="667" cy="542" r="11" strokeDasharray="12 5.280" strokeDashoffset="-3" />
      <path d="M653 542h28M667 528v28" stroke="#111" strokeWidth="3" />
      <path d="M654 542h26M667 529v26" stroke="#fff" />
      <path d="M671 532l5-3 4 3v4l-4 3-5-3z" fill="#fff" />
      <path d="M671 532l5 3 4-3M676 535v4" />
    </g>
    <g fill="none" stroke="#b5bdb5">
      <path d="M404 649l13-7 14 6v14l-13 6-14-8z" fill="#e4ebe4" />
      <path d="M404 649l14 5 13-6M418 654v14" />
    </g>
    <path d="M404 649L422 638" stroke="#c84848" strokeWidth="2" />
    <path d="M404 649L426 654" stroke="#3f9d4f" strokeWidth="2" />
    <path d="M404 649L405 673" stroke="#3b6ac4" strokeWidth="2" />
    <path d="M402 667h7l-3 7z" fill="#3b6ac4" />
    <circle cx="404" cy="649" r="2.500" fill="#ddd" stroke="#888" />
    <g fontSize="11" fontWeight="500">
      <text x="422" y="640" fill="#c65656">X</text>
      <text x="427" y="658" fill="#569d5e">Y</text>
      <text x="403" y="683" fill="#4a74c4">Z</text>
    </g>
  </ModelSvg>
);

const FaceBlendDialog = () => (
  <Dialog>
    <DialogTitle>
      <Icon name="gear" size={14} />
      <strong>Face Blend</strong>
      <button type="button" aria-label="Reset">
        <Icon name="reset" size={13} />
      </button>
      <button type="button" aria-label="Close">
        <Icon name="close" size={13} />
      </button>
    </DialogTitle>
    <DialogBody>
      <Section title="Type" open>
        <SectionBody $pad="7px 7px 8px">
          <Drop label="Type" value="Two Defining Face Chains" icon="blend" />
        </SectionBody>
      </Section>
      <Section title="Face Chains" open>
        <SectionBody $pad="6px 7px">
          {[1, 2].map((n) => (
            <div key={n}>
              <ChainRow $active={n === 2}>
                <Icon name="tick" size={13} />
                <span>Select Face Chain {n} (1)</span>
                <ChainButton type="button" $active={n === 2} aria-label={`Face chain ${n}`}>
                  <Icon name={n === 2 ? "selFaceHot" : "selFace"} size={22} />
                </ChainButton>
              </ChainRow>
              <ReverseRow>
                <span>Reverse Direction</span>
                <ReverseButton type="button" aria-label="Reverse direction">
                  <Icon name="reverse" size={15} />
                </ReverseButton>
              </ReverseRow>
            </div>
          ))}
        </SectionBody>
      </Section>
      <Section title="Cross Section" open>
        <SectionBody $pad="4px 7px 7px">
          <Field>
            <label htmlFor="orientation">Section Orientation</label>
            <Drop id="orientation" value="Rolling Ball" icon="ball" />
          </Field>
          <Field>
            <label htmlFor="shape">Shape</label>
            <Drop id="shape" value="Circular" icon="circular" />
          </Field>
          <Field>
            <label htmlFor="method">Radius Method</label>
            <Drop id="method" value="Constant" />
          </Field>
          <Field>
            <label htmlFor="radius">Radius</label>
            <DropBox>
              <input id="radius" defaultValue="35" />
              <Unit>mm</Unit>
              <DropArrow>
                <Icon name="fat" size={13} />
              </DropArrow>
            </DropBox>
          </Field>
        </SectionBody>
      </Section>
      <Section title="Constraining and Limiting Geometry" />
      <Section title="Trim and Sew Options" />
      <Section title="Settings" />
      <Section title="Preview" />
      <DialogActions>
        <ActionButton type="button" $primary>
          &lt; OK &gt;
        </ActionButton>
        <ActionButton type="button">Apply</ActionButton>
        <ActionButton type="button">Cancel</ActionButton>
      </DialogActions>
    </DialogBody>
  </Dialog>
);

const PartNavigator = () => (
  <Navigator>
    <NavigatorTitle>
      <Icon name="pin" size={12} />
      Part Navigator
    </NavigatorTitle>
    <Tree>
      <TreeHeader>
        Name <Icon name="triUp" size={12} />
      </TreeHeader>
      <TreeRow>
        <Stub $wide />
        <Icon name="clock" size={15} />
        History Mode
      </TreeRow>
      <TreeRow $odd>
        <Toggle>+</Toggle>
        <Stub />
        <Icon name="views" size={15} />
        Model Views
      </TreeRow>
      <TreeRow>
        <Toggle>+</Toggle>
        <Stub />
        <Icon name="tick" size={12} />
        <Icon name="camera" size={14} />
        Cameras
      </TreeRow>
      <TreeRow $odd>
        <Toggle>−</Toggle>
        <Stub />
        <Icon name="folder" size={15} />
        Model History
      </TreeRow>
      {features.map(([icon, label, tone], i) => (
        <TreeRow key={i} $odd={i % 2 === 1} $tone={tone} $child>
          <Stub />
          <input type="checkbox" id={`feature-${i}`} defaultChecked />
          <Icon name={icon} size={14} />
          <label htmlFor={`feature-${i}`}>{label}</label>
        </TreeRow>
      ))}
      <EmptyRows />
      <ScrollBar>
        <Icon name="left" size={10} />
        <ScrollThumb>III</ScrollThumb>
        <Icon name="right" size={10} />
      </ScrollBar>
    </Tree>
    <Splitter>
      <span />
    </Splitter>
    <Section title="Dependencies" />
    <Section title="Details" />
    <Section title="Preview" />
  </Navigator>
);

const App = () => (
  <>
    <GlobalStyle />
    <Shell>
      <TitleBar>
        <QuickBar>
          <Icon name="logo" size={15} />
          <Icon name="save" size={14} />
          <Bar />
          <Icon name="undo" size={13} />
          <Icon name="caret" size={6} />
          <Icon name="redo" size={13} />
          <Bar />
          <Icon name="cut" size={14} />
          <Icon name="copy" size={14} />
          <Icon name="paste" size={14} />
          <Bar />
          <Icon name="blend" size={14} />
          <Icon name="caret" size={6} />
          <Bar />
          <WindowMenu type="button">
            <Icon name="window" size={14} />
            Window
            <Icon name="caret" size={7} />
            <Icon name="toEnd" size={9} />
          </WindowMenu>
        </QuickBar>
        <Caption>NX 9 - Modeling - [Face Blend_01.prt (Modified) ]</Caption>
        <TitleRight>
          <Brand>SIEMENS</Brand>
          <WindowButton type="button" aria-label="Minimize">
            <Icon name="min" size={12} />
          </WindowButton>
          <WindowButton type="button" aria-label="Maximize">
            <Icon name="max" size={12} />
          </WindowButton>
          <WindowButton type="button" aria-label="Close" $close>
            <Icon name="cross2" size={12} />
          </WindowButton>
        </TitleRight>
      </TitleBar>
      <TabBar>
        <FileTab type="button">File</FileTab>
        {menuTabs.map((tab) => (
          <MenuTab type="button" key={tab} $active={tab === "Surface"}>
            {tab}
          </MenuTab>
        ))}
        <TabTools>
          <input placeholder="Find a Command" aria-label="Find a Command" />
          <Icon name="search" size={13} />
          <Icon name="full" size={14} />
          <Icon name="up" size={14} />
          <Help>?</Help>
          <MdiButtons>
            <button type="button" aria-label="Minimize part">
              <Icon name="min" size={10} />
            </button>
            <button type="button" aria-label="Restore part">
              <Icon name="restore" size={10} />
            </button>
            <button type="button" aria-label="Close part">
              <Icon name="cross2" size={10} />
            </button>
          </MdiButtons>
        </TabTools>
      </TabBar>
      <Ribbon>
        <Group>
          <GroupItems>
            <Big icon="realize" label="Realize Shape" />
            <Big icon="studio" label="Studio Surface" menu />
            <Small
              width="110px"
              items={[
                ["through", "Through Curves"],
                ["swept", "Swept"],
                ["law", "Law Extension"],
              ]}
            />
            <Gallery>
              <SmallButton type="button">
                <Icon name="blend" size={13} />
                Face Blend
              </SmallButton>
              <GalleryScroll>
                <Icon name="triUp" size={8} />
              </GalleryScroll>
            </Gallery>
            <Small
              width="122px"
              items={[
                ["fourPoint", "Four Point Surface"],
                ["rapid", "Rapid Surfacing"],
              ]}
            />
            <More icon="more" />
          </GroupItems>
          <GroupLabel>
            <span />
            <Icon name="caret" size={8} />
          </GroupLabel>
        </Group>
        <Group>
          <GroupItems>
            <Big icon="offset" label="Offset Surface" />
            <Big icon="trimmed" label="Trimmed Sheet" />
            <Small
              width="113px"
              items={[
                ["trimBody", "Trim Body"],
                ["trimExtend", "Trim and Extend"],
                ["snip", "Snip Surface"],
              ]}
            />
            <More icon="moreOps" />
          </GroupItems>
          <GroupLabel>
            <span>Surface Operations</span>
            <Icon name="caret" size={8} />
          </GroupLabel>
        </Group>
        <Group>
          <GroupItems>
            <Big icon="xform" label="X-Form" />
            <Small
              width="98px"
              items={[
                ["iform", "I-Form"],
                ["match", "Match Edge"],
                ["symmetry", "Edge Symmetry"],
              ]}
            />
            <Big icon="enlarge" label="Enlarge" />
            <Small
              width="120px"
              items={[
                ["global", "Global Shaping"],
                ["refit", "Refit Face"],
                ["uv", "Edit U/V Direction"],
              ]}
            />
            <More icon="moreEdit" />
          </GroupItems>
          <GroupLabel>
            <span>Edit Surface</span>
            <Icon name="caret" size={8} />
          </GroupLabel>
        </Group>
        <RibbonEnd>
          <Icon name="caret" size={8} />
        </RibbonEnd>
      </Ribbon>
      <SelectionBar>
        <MenuButton type="button">
          <Icon name="menu" size={14} />
          <span>
            <u>M</u>enu
          </span>
          <Icon name="caret" size={7} />
        </MenuButton>
        <FilterSlot>
          <Drop label="Type filter" value="Face" small />
        </FilterSlot>
        <ScopeGrid>
          <ToolRow>
            <Icon name="caret" size={7} />
            <Icon name="cube" />
            <Push>
              <Drop label="Curve rule" value="Single Curve" disabled small />
            </Push>
          </ToolRow>
          <ToolRow>
            <Icon name="cubeLine" size={8} />
            <Drop label="Face rule" value="Single Face" small />
            <Icon name="go" size={13} />
          </ToolRow>
        </ScopeGrid>
        <SnapGrid>
          {snapRows.flat().map((name) => (
            <Icon key={name} name={name} />
          ))}
        </SnapGrid>
        <LayerSlot>
          <Drop label="Work layer" value="1" small />
        </LayerSlot>
        <ViewGrid>
          <Icon name="zoomWin" />
          <Icon name="rotate" />
          <Icon name="fit" />
          <Icon name="caret" size={7} />
          <Icon name="cube" />
          <Icon name="caret" size={7} />
          <Icon name="orient" />
          <Icon name="pan" />
          <Icon name="persp" />
          <Icon name="section" />
          <Icon name="caret" size={7} />
          <Icon name="show" />
          <Icon name="caret" size={7} />
          <Icon name="orientAxis" />
        </ViewGrid>
        <MeasureSlot>
          <Icon name="measure" />
        </MeasureSlot>
        <RibbonEnd>
          <Icon name="caret" size={7} />
        </RibbonEnd>
      </SelectionBar>
      <Main>
        <ResourceBar>
          {resourceTabs.map(([icon, label]) => (
            <ResourceTab
              type="button"
              key={label}
              aria-label={label}
              $active={icon === "partNav"}
              $spaced={icon === "info" || icon === "web" || icon === "clock"}
            >
              <Icon name={icon} size={21} />
            </ResourceTab>
          ))}
          <ResourceCut>
            <Icon name="wizard" size={20} />
          </ResourceCut>
          {["toTop", "triUp", "caret", "toEnd"].map((name) => (
            <TinyButton type="button" key={name} aria-label={name}>
              <Icon name={name} size={9} />
            </TinyButton>
          ))}
        </ResourceBar>
        <PartNavigator />
        <Viewport>
          <Model />
          <ChainTag>
            <Grip />
            <span>Face Chain 1</span>
          </ChainTag>
          <RadiusTag>
            <Grip />
            <label htmlFor="canvas-radius">Radius</label>
            <RadiusBox>
              <input id="canvas-radius" defaultValue="35" />
              <DropArrow>
                <Icon name="fat" size={12} />
              </DropArrow>
            </RadiusBox>
          </RadiusTag>
        </Viewport>
      </Main>
      <StatusBar>
        <strong>Select faces for chain 2</strong>
        <StatusCell />
        <StatusCell $wide />
        <StatusCell $wide>
          <StatusGray />
          <Icon name="full" size={14} />
        </StatusCell>
      </StatusBar>
      <FaceBlendDialog />
    </Shell>
  </>
);

export default App;

const GlobalStyle = createGlobalStyle`
  * {
    box-sizing: border-box;
  }
  body {
    margin: 0;
    background: #000;
    color: #2d2d2d;
    font: 11px/16px Roboto, "Noto Sans", sans-serif;
  }
  button,
  input,
  select {
    font: inherit;
    color: inherit;
    margin: 0;
    padding: 0;
    border: 0;
    background: none;
    outline: 0;
  }
  svg {
    flex: none;
  }
`;

const Shell = styled.div`
  position: relative;
  display: flex;
  flex-direction: column;
  width: 90%;
  height: 100vh;
  margin: 0 auto;
  overflow: hidden;
  border-left: 2px solid #111;
  border-bottom: 7px solid #18181a;
  background: #1a1a1a;
`;

const TitleBar = styled.header`
  display: flex;
  align-items: center;
  height: 28px;
  border-top: 2px solid #111;
  background:
    radial-gradient(ellipse 240px 20px at 110px 6px, #777 0, transparent 100%),
    linear-gradient(#656565 0, #454545 6px, #1a1a1a 7px);
`;

const QuickBar = styled.div`
  display: flex;
  align-items: center;
  gap: 6px;
  width: 298px;
  padding-left: 4px;
  color: #bbb;
`;

const Bar = styled.span`
  width: 1px;
  height: 14px;
  background: #333;
`;

const WindowMenu = styled.button`
  display: flex;
  align-items: center;
  gap: 3px;
  color: #c0c0c0;
`;

const Caption = styled.div`
  flex: 1;
  text-align: center;
  color: #d8d8d8;
`;

const TitleRight = styled.div`
  display: flex;
  align-items: center;
  width: 135px;
  gap: 4px;
`;

const Brand = styled.strong`
  flex: 1;
  color: #fff;
  font: 900 12px/16px "Liberation Sans", sans-serif;
`;

const WindowButton = styled.button`
  display: grid;
  place-items: center;
  width: 17px;
  height: 16px;
  border-radius: 2px;
  color: #fff;
  background: ${({ $close }) => ($close ? "#d6503f" : "linear-gradient(#666, #333)")};
`;

const TabBar = styled.nav`
  display: flex;
  height: 23px;
  background: linear-gradient(90deg, #151515 60%, #484848);
`;

const MenuTab = styled.button`
  padding: 0 6px;
  border-radius: 3px 3px 0 0;
  color: ${({ $active }) => ($active ? "#2b2b62" : "#e4e4e4")};
  background: ${({ $active }) => ($active ? "#efeff2" : "none")};
`;

const FileTab = styled(MenuTab)`
  width: 52px;
  margin-right: 1px;
  color: #fff;
  background: linear-gradient(#6f9ccb, #245a9f 40%, #3a73b8);
`;

const TabTools = styled.div`
  display: flex;
  flex: 1;
  align-items: center;
  justify-content: flex-end;
  gap: 10px;
  padding-right: 3px;
  color: #ddd;
  input {
    width: 98px;
    height: 17px;
    padding: 0 2px;
    border: 1px solid #666;
    background: #2a2a2a;
  }
  input::placeholder {
    color: #9a9a9a;
  }
`;

const Help = styled.span`
  width: 13px;
  border-radius: 7px;
  color: #fff;
  background: #4668b4;
  font-weight: 700;
  line-height: 13px;
  text-align: center;
`;

const MdiButtons = styled.div`
  display: flex;
  gap: 3px;
  button {
    display: grid;
    place-items: center;
    width: 14px;
    height: 14px;
    border-radius: 2px;
    color: #333;
    background: #e0e0e0;
  }
`;

const Ribbon = styled.section`
  display: flex;
  height: 83px;
  border-bottom: 1px solid #a8a8a8;
  background: linear-gradient(#ececec, #dcdcdc 60%, #cecece);
`;

const Group = styled.div`
  display: flex;
  flex-direction: column;
  margin: 1px 0;
  padding: 0 5px;
  border-right: 1px solid #f8f8f8;
`;

const GroupItems = styled.div`
  display: flex;
  flex: 1;
`;

const GroupLabel = styled.div`
  display: flex;
  align-items: center;
  height: 16px;
  color: #555;
  span {
    flex: 1;
    text-align: center;
  }
`;

const BigButton = styled.button`
  display: flex;
  flex-direction: column;
  align-items: center;
  width: 47px;
  padding-top: 4px;
  gap: 4px;
  line-height: 13px;
`;

const SmallColumn = styled.div`
  width: ${({ $width }) => $width};
  padding-left: 6px;
`;

const SmallButton = styled.button`
  display: flex;
  align-items: center;
  gap: 2px;
  height: 20px;
  white-space: nowrap;
`;

const MoreButton = styled.button`
  display: flex;
  flex-direction: column;
  align-items: center;
  width: 34px;
  padding-top: 3px;
  line-height: 18px;
`;

const MoreBox = styled.span`
  display: grid;
  place-items: center;
  width: 33px;
  height: 31px;
  border: 1px solid #c8c8c8;
`;

const Gallery = styled.div`
  display: flex;
  justify-content: space-between;
  align-self: flex-start;
  width: 140px;
  height: 58px;
  margin: 3px 5px 0 0;
  padding-left: 3px;
  border: 1px solid #bdbdbd;
`;

const GalleryScroll = styled.span`
  display: grid;
  place-items: center;
  width: 14px;
  height: 20px;
  border: 1px solid #c8c8c8;
  background: #eee;
`;

const RibbonEnd = styled.div`
  display: flex;
  flex: 1;
  align-self: stretch;
  align-items: flex-end;
  justify-content: flex-end;
  padding: 0 3px 4px;
`;

const SelectionBar = styled.section`
  display: flex;
  align-items: center;
  height: 47px;
  border-bottom: 1px solid #999;
  background: linear-gradient(#d9d9d9, #d2d2d2);
`;

const MenuButton = styled.button`
  display: flex;
  align-items: center;
  gap: 3px;
  width: 70px;
  height: 38px;
  padding-left: 9px;
  border-right: 1px solid #f2f2f2;
`;

const FilterSlot = styled.div`
  width: 118px;
  margin: 0 284px 0 10px;
`;

const ScopeGrid = styled.div`
  width: 272px;
`;

const ToolRow = styled.div`
  display: flex;
  align-items: center;
  gap: 6px;
  height: 21px;
  > svg:first-child {
    margin-right: 2px;
  }
`;

const DropBox = styled.div`
  display: flex;
  align-items: center;
  width: 100%;
  height: ${({ $small }) => ($small ? "17px" : "21px")};
  border: 1px solid ${({ $disabled }) => ($disabled ? "#aaa" : "#5d6b78")};
  border-radius: ${({ $small }) => ($small ? "0" : "3px")};
  background: ${({ $disabled }) => ($disabled ? "#d4d4d4" : "#fff")};
  color: ${({ $disabled }) => ($disabled ? "#aaa" : "inherit")};
  overflow: hidden;
  > svg {
    margin-left: 2px;
  }
  select,
  input {
    flex: 1;
    width: 0;
    height: 100%;
    padding-left: 3px;
    appearance: none;
  }
  select:disabled {
    opacity: 1;
  }
  ${ToolRow} & {
    width: 125px;
  }
`;

const DropArrow = styled.span`
  display: grid;
  place-items: center;
  align-self: stretch;
  width: 14px;
  color: ${({ $disabled }) => ($disabled ? "#999" : "#111")};
  background: ${({ $disabled }) => ($disabled ? "#ddd" : "linear-gradient(#b5d3ee, #5da0dc)")};
  border-left: 1px solid ${({ $disabled }) => ($disabled ? "#bbb" : "#4d7aa8")};
`;

const Push = styled.div`
  margin-left: auto;
  margin-right: -6px;
`;

const SnapGrid = styled.div`
  display: grid;
  grid-template-columns: repeat(6, 16px);
  gap: 4px 7px;
  padding: 0 10px 0 15px;
  border-right: 1px solid #eee;
`;

const LayerSlot = styled.div`
  width: 42px;
  margin: 0 8px;
`;

const ViewGrid = styled.div`
  display: grid;
  grid-template-columns: 16px 16px 16px 7px 16px 7px 16px;
  align-items: center;
  gap: 4px 6px;
  padding-right: 9px;
  border-right: 1px solid #eee;
`;

const MeasureSlot = styled.div`
  display: grid;
  place-items: center;
  width: 34px;
  height: 38px;
  border-right: 1px solid #eee;
`;

const Main = styled.main`
  display: flex;
  flex: 1;
  min-height: 0;
`;

const ResourceBar = styled.div`
  display: flex;
  flex-direction: column;
  align-items: flex-end;
  width: 29px;
  padding-top: 13px;
  background: linear-gradient(90deg, #8f8f8f, #b5b5b5);
`;

const ResourceTab = styled.button`
  display: grid;
  place-items: center;
  flex: none;
  width: ${({ $active }) => ($active ? "26px" : "24px")};
  height: 36px;
  margin-top: ${({ $spaced }) => ($spaced ? "12px" : "2px")};
  border: 1px solid #777;
  border-right: ${({ $active }) => ($active ? "0" : "1px solid #888")};
  border-radius: 4px 0 0 4px;
  background: ${({ $active }) => ($active ? "#eee" : "linear-gradient(90deg, #d8d8d8, #bcbcbc)")};
`;

const ResourceCut = styled.div`
  flex: 1;
  width: 24px;
  margin: 1px 0 2px;
  overflow: hidden;
  border: 1px solid #777;
  background: #ccc;
`;

const TinyButton = styled.button`
  display: grid;
  place-items: center;
  width: 13px;
  height: 13px;
  margin: 0 6px 2px 0;
  border: 1px solid #999;
  background: #e2e2e2;
`;

const Navigator = styled.aside`
  display: flex;
  flex-direction: column;
  width: 265px;
  padding: 0 9px 3px;
  border-right: 1px solid #888;
  background: #ebebeb;
`;

const NavigatorTitle = styled.h2`
  display: flex;
  align-items: center;
  gap: 8px;
  height: 27px;
  margin: 0;
  padding-left: 3px;
  font-size: 12px;
`;

const Tree = styled.div`
  display: flex;
  flex: 1;
  flex-direction: column;
  min-height: 0;
  border: 1px solid #777;
  background: #fff;
`;

const TreeHeader = styled.div`
  display: flex;
  align-items: center;
  gap: 12px;
  height: 18px;
  padding-left: 6px;
  border-bottom: 1px solid #bbb;
  background: linear-gradient(#f2f2f2, #d6d6d6);
  path {
    fill: #111;
  }
`;

const TreeRow = styled.div`
  display: flex;
  align-items: center;
  gap: 2px;
  height: 18px;
  padding-left: ${({ $child }) => ($child ? "26px" : "4px")};
  overflow: hidden;
  border-bottom: 1px solid #e6e6e6;
  background: ${({ $odd }) => ($odd ? "#f6f6f6" : "#fff")};
  color: ${({ $tone }) => ($tone ? "#9a9a9a" : "#444")};
  font-weight: ${({ $tone }) => ($tone === "bold" ? 500 : 400)};
  white-space: nowrap;
  input {
    display: grid;
    flex: none;
    place-items: center;
    width: 11px;
    height: 11px;
    margin-right: 1px;
    border: 1px solid #234a2c;
    appearance: none;
  }
  input:checked::after {
    content: "✔";
    color: #1fa83a;
    font: 12px/9px "DejaVu Sans", sans-serif;
  }
`;

const Toggle = styled.span`
  width: 8px;
  height: 8px;
  border: 1px solid #888;
  font-size: 8px;
  line-height: 6px;
  text-align: center;
`;

const Stub = styled.span`
  width: 3px;
  border-top: 1px dotted #aaa;
  ${TreeRow} > &:first-child {
    margin-left: ${({ $wide }) => ($wide ? "3px" : "0")};
    width: ${({ $wide }) => ($wide ? "10px" : "8px")};
  }
`;

const EmptyRows = styled.div`
  flex: 1;
  background: repeating-linear-gradient(#fff 0 17px, #e6e6e6 17px 18px, #f6f6f6 18px 35px, #e6e6e6 35px 36px);
`;

const ScrollBar = styled.div`
  display: flex;
  align-items: center;
  justify-content: space-between;
  height: 17px;
  padding: 0 3px;
  background: #ececec;
`;

const ScrollThumb = styled.span`
  width: 61px;
  height: 13px;
  margin: 0 auto 0 4px;
  border: 1px solid #999;
  background: linear-gradient(#f4f4f4, #cfcfcf);
  font-size: 8px;
  line-height: 11px;
  text-align: center;
`;

const Splitter = styled.div`
  display: flex;
  align-items: center;
  justify-content: center;
  height: 11px;
  &::before,
  &::after {
    content: "";
    flex: 1;
    border-top: 1px solid #c4c4c4;
  }
  span {
    width: 43px;
    height: 6px;
    margin: 0 3px;
    border: 1px solid #bbb;
    background: #d0d0d0;
  }
`;

const SectionHeader = styled.button`
  display: flex;
  flex: none;
  align-items: center;
  justify-content: space-between;
  width: 100%;
  height: 21px;
  padding-left: 6px;
  border-bottom: 1px solid #a0a0a0;
  background: linear-gradient(#f7f7f7, #e6e6e6 45%, #d6d6d6);
  color: #25255c;
`;

const SectionChevron = styled.span`
  display: grid;
  place-items: center;
  width: 20px;
  height: 20px;
  border-left: 1px solid #c2c2c2;
`;

const Viewport = styled.section`
  position: relative;
  flex: 1;
  overflow: hidden;
  background: linear-gradient(#b8b8b8, #cecece 30%, #e6e6e6 75%, #e9e9e9);
`;

const ModelSvg = styled.svg`
  display: block;
  width: 100%;
  height: 100%;
`;

const Tag = styled.div`
  position: absolute;
  display: flex;
  align-items: center;
  gap: 5px;
  padding-right: 4px;
  border: 1px solid #888;
  background: linear-gradient(#e2e2e2, #c8c8c8);
`;

const ChainTag = styled(Tag)`
  left: 238px;
  top: 149px;
  height: 25px;
`;

const RadiusTag = styled(Tag)`
  left: 549px;
  top: 419px;
  height: 26px;
`;

const Grip = styled.span`
  align-self: stretch;
  width: 10px;
  background:
    radial-gradient(#aaa 1px, transparent 1px) 1px 0 / 3px 3px,
    linear-gradient(90deg, #777, #161616 70%);
`;

const RadiusBox = styled.div`
  display: flex;
  height: 18px;
  margin-left: -2px;
  border: 1px solid #4d7aa8;
  border-radius: 3px;
  overflow: hidden;
  background: #fff;
  input {
    width: 37px;
    padding-left: 2px;
    color: #fff;
    background: linear-gradient(#3992dc, #3992dc) 1px 1px / 14px 14px no-repeat;
  }
`;

const StatusBar = styled.footer`
  display: flex;
  align-items: center;
  height: 21px;
  padding-left: 2px;
  border-top: 1px solid #f4f4f4;
  background: #d8d8d8;
  color: #222;
  strong {
    flex: 1;
    font-weight: 500;
  }
`;

const StatusCell = styled.div`
  display: flex;
  align-items: center;
  gap: 5px;
  width: ${({ $wide }) => ($wide ? "33px" : "18px")};
  height: 18px;
  border-left: 1px solid #f2f2f2;
  &:last-child {
    width: 51px;
    padding-left: 3px;
  }
`;

const StatusGray = styled.span`
  width: 14px;
  height: 14px;
  background: #8d8d8d;
`;

const Dialog = styled.form`
  position: absolute;
  left: 195px;
  top: 81px;
  width: 275px;
  border: 1px solid #222;
  border-bottom: 7px solid #161616;
  border-radius: 6px;
  overflow: hidden;
  background: #e9e9e9;
`;

const DialogTitle = styled.div`
  display: flex;
  align-items: center;
  height: 18px;
  padding-left: 2px;
  background: linear-gradient(#555, #1c1c1c 45%);
  color: #eee;
  strong {
    flex: 1;
    margin-left: 4px;
    padding-left: 5px;
    border-left: 1px solid #999;
    font-weight: 500;
  }
  button {
    display: grid;
    place-items: center;
    width: 19px;
    height: 18px;
    border-left: 1px solid #888;
  }
`;

const DialogBody = styled.div`
  padding: 3px 5px 10px;
`;

const SectionBody = styled.div`
  padding: ${({ $pad }) => $pad};
  border: solid #aaa;
  border-width: 0 1px;
  background: linear-gradient(#cfcfcf, #d6d6d6);
`;

const ChainRow = styled.div`
  display: flex;
  align-items: center;
  gap: 5px;
  height: 27px;
  border-radius: 4px;
  background: ${({ $active }) =>
    $active ? "linear-gradient(90deg, #e2a163 30%, #dfb285 55%, transparent 90%)" : "none"};
  span {
    flex: 1;
  }
`;

const ChainButton = styled.button`
  display: grid;
  place-items: center;
  width: 26px;
  height: 26px;
  border: 1px solid #555;
  border-radius: 3px;
  background: ${({ $active }) =>
    $active ? "linear-gradient(#f29a5e, #fcb66e)" : "linear-gradient(#fafafa, #d0d0d0)"};
`;

const ReverseRow = styled.div`
  display: flex;
  align-items: center;
  justify-content: space-between;
  height: 27px;
`;

const ReverseButton = styled.button`
  display: grid;
  place-items: center;
  width: 20px;
  height: 19px;
  border: 1px solid #555;
  border-radius: 3px;
  background: linear-gradient(#fafafa, #dcdcdc);
`;

const Field = styled.div`
  display: flex;
  align-items: center;
  justify-content: space-between;
  height: 24px;
  ${DropBox} {
    width: 116px;
  }
`;

const Unit = styled.span`
  align-self: stretch;
  width: 43px;
  padding-left: 4px;
  background: #cdcdcd;
  line-height: 19px;
`;

const DialogActions = styled.div`
  display: flex;
  justify-content: flex-end;
  gap: 6px;
  margin-top: 3px;
  padding: 3px 9px 0 0;
  border-top: 1px solid #bbb;
`;

const ActionButton = styled.button`
  width: 58px;
  height: 19px;
  border: 1px solid #555;
  border-radius: 2px;
  background: ${({ $primary }) =>
    $primary ? "linear-gradient(#9ddf88, #6cc95a 50%, #a5f08c)" : "linear-gradient(#eee, #c6c6c6 50%, #e6e6e6)"};
`;
